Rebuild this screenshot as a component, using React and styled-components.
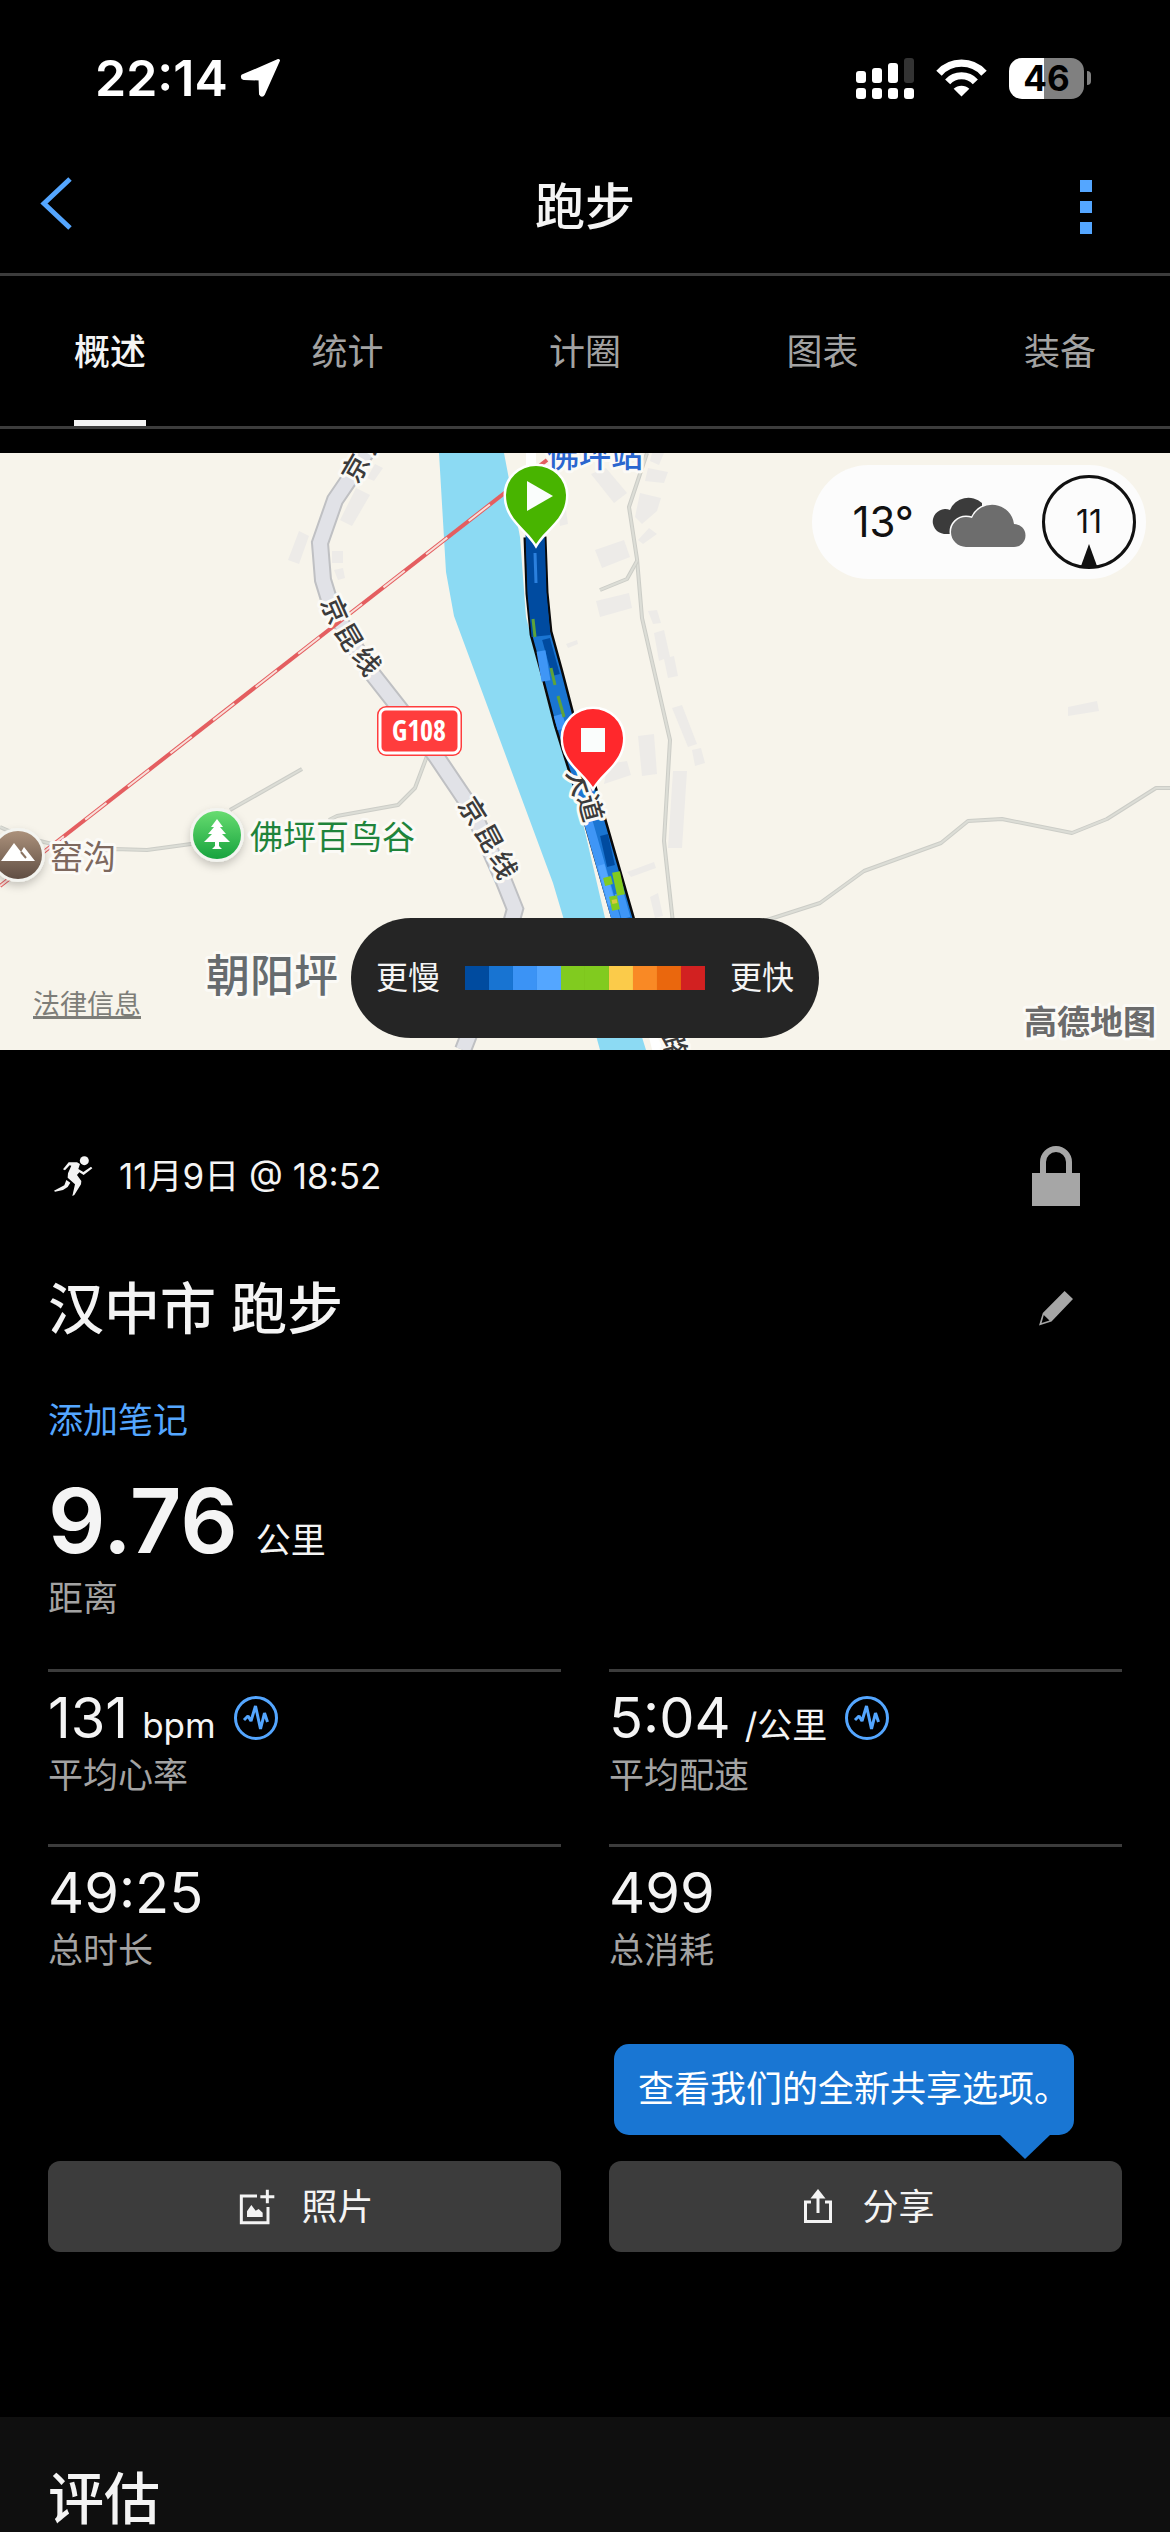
import React, { useState } from 'react';
import styled, { createGlobalStyle, css } from 'styled-components';

const colors = {
  text: '#f4f4f4',
  muted: '#a3a3a3',
  line: '#3c3c3c',
  blue: '#54a6ff',
  tip: '#1976d3',
}

const GlobalStyle = createGlobalStyle`
  * {
    box-sizing: border-box;
  }
  body {
    margin: 0;
    background-color: #000;
    color: ${colors.text};
    font-family: Inter, "Noto Sans CJK SC", sans-serif;
  }
  button {
    font-family: inherit;
  }
`
const sharedBtnCss = css`
  margin: 0;
  padding: 0;
  border: none;
  outline: none;
  background: transparent;
  cursor: pointer;
`
const Page = styled.div`
  min-height: 100vh;
  display: flex;
  flex-direction: column;
`

/* Status bar */
const StatusBar = styled.div`
  height: 120px;
  padding: 36px 79px 0 95px;
  display: flex;
  align-items: center;
  justify-content: space-between;
`
const StatusGroup = styled.div`
  display: flex;
  align-items: center;
  gap: ${props => props.$gap};
`
const Clock = styled.span`
  font-size: 50px;
  line-height: 60px;
  font-weight: 600;
  color: #fff;
`
const BatteryWrapper = styled.div`
  display: flex;
  align-items: center;
  gap: 3px;
`
const BatteryLevel = styled.div`
  width: 75px;
  height: 41px;
  border-radius: 13px;
  text-align: center;
  font-size: 35px;
  line-height: 41px;
  font-weight: 700;
  color: #000;
  background: linear-gradient(to right, #fff 47%, #808080 47%);
`
const BatteryNub = styled.div`
  width: 4px;
  height: 14px;
  border-radius: 0 4px 4px 0;
  background-color: #808080;
`

/* Header and tabs */
const Header = styled.header`
  height: 156px;
  padding: 21px 40px 0 40px;
  display: grid;
  grid-template-columns: 1fr auto 1fr;
  align-items: center;
  border-bottom: 3px solid ${colors.line};
`
const HeaderTitle = styled.h1`
  margin: 0;
  font-size: 50px;
  line-height: 60px;
  font-weight: 500;
`
const HeaderButton = styled.button`
  ${sharedBtnCss}
  display: flex;
  justify-self: ${props => props.$side};
`
const MenuButton = styled(HeaderButton)`
  padding: 0 38px;
`
const Tabs = styled.nav`
  height: 153px;
  padding: 0 74px;
  display: flex;
  justify-content: space-between;
  border-bottom: 3px solid ${colors.line};
`
const Tab = styled.button`
  ${sharedBtnCss}
  border-top: 8px solid transparent;
  border-bottom: 6px solid ${props => props.$active ? colors.text : 'transparent'};
  font-size: 36px;
  line-height: 48px;
  font-weight: ${props => props.$active ? 500 : 400};
  color: ${props => props.$active ? colors.text : colors.muted};
`

/* Map */
const MapWrapper = styled.section`
  position: relative;
  height: 597px;
  margin-top: 24px;
  overflow: hidden;
  background-color: #f7f4eb;
`
const MapCanvas = styled.svg`
  display: block;
  width: 100%;
  height: 100%;
`
const WeatherPill = styled.div`
  position: absolute;
  top: 12px;
  right: 24px;
  height: 114px;
  padding: 0 10px 0 40px;
  display: flex;
  align-items: center;
  border-radius: 57px;
  background-color: #fcfcfc;
  color: #111;
`
const Temperature = styled.span`
  margin-right: 18px;
  font-size: 42px;
  line-height: 48px;
`
const Wind = styled.div`
  position: relative;
  width: 94px;
  height: 94px;
  margin-left: 16px;
  display: flex;
  align-items: center;
  justify-content: center;
  border: 3px solid #111;
  border-radius: 50%;
  font-size: 32px;
  line-height: 36px;
  svg {
    position: absolute;
    bottom: 0;
  }
`
const PaceLegend = styled.div`
  position: absolute;
  left: 50%;
  bottom: 12px;
  height: 120px;
  padding: 0 25px;
  display: flex;
  align-items: center;
  gap: 25px;
  border-radius: 60px;
  background-color: #252525;
  font-size: 32px;
  line-height: 36px;
  white-space: nowrap;
  transform: translateX(-50%);
`
const PaceScale = styled.div`
  display: flex;
`
const PaceStep = styled.span`
  width: 24px;
  height: 24px;
  background-color: ${props => props.$color};
`
const LegalLink = styled.a`
  position: absolute;
  left: 33px;
  bottom: 27px;
  font-size: 27px;
  line-height: 36px;
  color: #7d7d78;
  text-decoration: underline;
  text-decoration-thickness: 3px;
`

/* Activity details */
const Details = styled.main`
  padding: 96px 48px 165px 48px;
`
const MetaRow = styled.div`
  height: ${props => props.$height};
  margin-top: ${props => props.$top};
  padding-right: 42px;
  display: flex;
  align-items: center;
  justify-content: space-between;
`
const DateInfo = styled.div`
  padding-left: 6px;
  display: flex;
  align-items: center;
  gap: 26px;
  font-size: 35px;
  line-height: 48px;
`
const IconButton = styled.button`
  ${sharedBtnCss}
  width: 48px;
  display: flex;
  justify-content: center;
`
const ActivityName = styled.h2`
  margin: 0;
  font-size: 56px;
  line-height: 72px;
  font-weight: 500;
`
const NoteButton = styled.button`
  ${sharedBtnCss}
  display: block;
  margin-top: 51px;
  font-size: 35px;
  line-height: 48px;
  color: ${colors.blue};
`
const Distance = styled.div`
  margin-top: 29px;
  display: flex;
  align-items: baseline;
  gap: 18px;
  font-size: 90px;
  line-height: 96px;
  font-weight: 600;
`
const Unit = styled.span`
  font-size: 35px;
  line-height: 36px;
  font-weight: 400;
`
const Label = styled.div`
  margin-top: ${props => props.$top};
  font-size: 35px;
  line-height: 48px;
  color: ${colors.muted};
`
const StatGrid = styled.div`
  margin-top: 47px;
  display: grid;
  grid-template-columns: 1fr 1fr;
  column-gap: 48px;
`
const StatCell = styled.div`
  height: 175px;
  padding-top: 14px;
  border-top: 3px solid ${colors.line};
`
const StatValue = styled.div`
  display: flex;
  align-items: center;
  gap: 18px;
  font-size: 56px;
  line-height: 64px;
`
const StatNumber = styled.span`
  display: flex;
  align-items: baseline;
  gap: 14px;
`
const Actions = styled.div`
  margin-top: 142px;
  display: grid;
  grid-template-columns: 1fr 1fr;
  column-gap: 48px;
`
const ActionWrapper = styled.div`
  position: relative;
`
const ActionButton = styled.button`
  ${sharedBtnCss}
  width: 100%;
  height: 91px;
  padding-left: 4px;
  display: flex;
  align-items: center;
  justify-content: center;
  gap: 26px;
  border-radius: 12px;
  background-color: ${colors.line};
  color: ${colors.text};
  font-size: 36px;
  line-height: 48px;
`
const Tooltip = styled.div`
  position: absolute;
  right: 48px;
  bottom: 117px;
  height: 91px;
  padding: 0 4px 0 24px;
  border-radius: 15px;
  background-color: ${colors.tip};
  color: #fff;
  font-size: 36px;
  line-height: 91px;
  white-space: nowrap;
  &::after {
    content: '';
    position: absolute;
    top: 100%;
    right: 24px;
    border: 25px solid transparent;
    border-top: 24px solid ${colors.tip};
    border-bottom: none;
  }
`
const Rating = styled.section`
  flex-grow: 1;
  padding: 52px 48px 0 48px;
  background-color: #0f0f0f;
  h2 {
    margin: 0;
    font-size: 56px;
    line-height: 60px;
    font-weight: 500;
  }
`

/* Icons */
const LocationIcon = () => (
  <svg width="42" height="40" viewBox="0 0 42 40" fill="#fff" stroke="#fff" strokeWidth="3" strokeLinejoin="round">
    <path d="M38.500 2.500 2.500 18 Q2 20 4 20.500 L20 21 20.500 36 Q22 38.500 23.500 36 Z" />
  </svg>
)

const SignalIcon = () => (
  <svg width="58" height="41" viewBox="0 0 58 41" fill="#fff">
    <rect x="0" y="13" width="10" height="12" rx="3" />
    <rect x="16" y="10" width="10" height="15" rx="3" />
    <rect x="32" y="5" width="10" height="20" rx="3" />
    <rect x="48" y="0" width="10" height="25" rx="3" fill="#333" />
    {[0, 16, 32, 48].map(x => <rect key={x} x={x} y="30" width="10" height="11" rx="3" />)}
  </svg>
)

const WifiIcon = () => (
  <svg width="51" height="38" viewBox="288 56 153 113" fill="none" stroke="#fff">
    <path d="M297 98 A91 91 0 0 1 432 98" strokeWidth="22" />
    <path d="M323 124 A57 57 0 0 1 406 124" strokeWidth="21" />
    <path d="M341 145 A34 34 0 0 1 388 145 L364.500 168 Z" fill="#fff" stroke="none" />
  </svg>
)

const BackIcon = () => (
  <svg width="33" height="62" viewBox="0 0 33 62" fill="none" stroke={colors.blue} strokeWidth="5">
    <path d="M30 3 4 27.500 30 52" />
  </svg>
)

const MenuIcon = () => (
  <svg width="12" height="54" viewBox="0 0 12 54" fill={colors.blue}>
    {[0, 21, 42].map(y => <rect key={y} y={y} width="12" height="12" />)}
  </svg>
)

const CloudsIcon = () => (
  <svg width="94" height="51" viewBox="0 0 94 51">
    <path d="M12 37 a12.500 12.500 0 1 1 6-24 A20 20 0 0 1 50 6 L50 37 Z" fill="#3b3b3b" />
    <path
      d="M34 50 a15 15 0 0 1 0-30 q3 0 6 1 A22 22 0 0 1 82 27 a11.500 11.500 0 0 1 0 23 Z"
      fill="#6d6d6d" stroke="#fcfcfc" strokeWidth="3" paintOrder="stroke"
    />
  </svg>
)

const RunnerIcon = () => (
  <svg width="39" height="42" viewBox="71 75 117 126" fill={colors.text}>
    <circle cx="162" cy="92" r="13.500" />
    <path d="M98 118 115 97 140 97 149 102 144 117 159 126 182 110 186 115 160 135 147 127 140 135 153 153 152 163 132 195 126 198 134 163 112 143 113 130 123 107 118 106 104 121Z" />
    <path d="M71 182 102 166 108 150 120 158 112 171 98 180 74 185Z" />
  </svg>
)

const LockIcon = () => (
  <svg width="48" height="60" viewBox="0 0 48 60">
    <rect y="27" width="48" height="33" fill="#a6a6a6" />
    <path d="M11 28V16a13 13 0 0 1 26 0V28" fill="none" stroke="#a6a6a6" strokeWidth="6" />
  </svg>
)

const PencilIcon = () => (
  <svg width="34" height="36" viewBox="0 0 34 36" fill="#a6a6a6" fillRule="evenodd">
    <path d="M25.600 0 34 8 12.500 30.400 0 34.500 3.800 22Z M2.600 32 4.800 24 10.500 29.500Z" />
  </svg>
)

const PulseIcon = () => (
  <svg width="44" height="44" viewBox="-22 -22 44 44" fill="none" stroke={colors.blue} strokeWidth="3">
    <circle r="20.500" />
    <path d="M-12 2-8-2-5 3-0.500-12 4.500 11 8.500-5 11.500 4" strokeLinejoin="bevel" />
  </svg>
)

const PhotoIcon = () => (
  <svg width="36" height="36" viewBox="60 81 108 108" fill="none" stroke={colors.text} strokeWidth="9">
    <path d="M114 102H67V182H147V135" />
    <path d="M145 83V124M124 104H166" />
    <path d="M84 165V148L97 129 110 146 119 141 131 152V165Z" fill={colors.text} stroke="none" />
  </svg>
)

const ShareIcon = () => (
  <svg width="36" height="36" viewBox="0 0 36 36" fill="none" stroke={colors.text} strokeWidth="3">
    <path d="M11 13H5.500V32.500H30.500V13H25" />
    <path d="M18 4V24" />
    <path d="M10.500 9.500 18 0 25.500 9.500Z" fill={colors.text} stroke="none" />
  </svg>
)

/* Map data, in map units */
const buildings = [
  '595,97 624,87 630,104 602,115', '591,21 606,15 627,40 614,50', '652,0 664,0 659,12 650,8',
  '648,15 668,19 664,30 645,28', '640,40 661,45 657,58 642,71 635,64', '649,75 657,81 643,91 638,87',
  '596,148 629,140 632,155 600,164', '648,158 657,157 661,170 653,171',
  '654,180 664,177 670,204 674,203 678,223 668,225 664,206 659,208',
  '672,255 682,252 697,291 688,294', '692,297 701,295 705,310 695,313',
  '638,283 654,281 657,321 642,323', '673,318 687,318 682,395 668,395',
  '608,311 627,308 631,322 604,331', '627,419 654,409 656,415 631,424',
  '650,444 658,440 663,463 655,465', '1068,254 1097,248 1099,258 1068,263',
  '356,35 370,42 352,73 340,67', '375,11 383,15 374,28 367,25', '299,78 309,83 299,111 288,107',
  '332,98 343,98 343,110 332,110', '334,117 343,115 345,125 338,127',
  '566,191 577,187 578,191 568,195', '558,52 565,50 568,71 560,73',
]

const lanes = [
  '647,0 640,21 629,54 637,106 642,165 670,287 664,388 673,470',
  '637,108 627,126 600,137',
  '740,477 767,467 820,450 864,418 941,390 968,368 1002,366 1072,380 1107,366 1156,335 1170,335',
  '427,303 415,335 398,352 337,363 329,367',
  '302,316 230,357',
  '0,374 20,383 80,398 115,396 147,397 191,391',
]

const highway = '372,-10 350,25 335,47 320,90 323,127 331,153 367,214 400,256 436,303 471,355 503,426 515,456 507,485 463,597'

/* each character follows the direction of its road */
const roadNames = [
  { char: '京', x: 355, y: 15, angle: -60 },
  { char: '昆', x: 371, y: -12, angle: -58 },
  { char: '京', x: 335, y: 157, angle: 66 },
  { char: '昆', x: 349, y: 184, angle: 60 },
  { char: '线', x: 367, y: 208, angle: 54 },
  { char: '京', x: 473, y: 358, angle: 58 },
  { char: '昆', x: 489, y: 385, angle: 62 },
  { char: '线', x: 504, y: 412, angle: 66 },
  { char: '大', x: 580, y: 329, angle: 72 },
  { char: '道', x: 591, y: 355, angle: 75 },
  { char: '路', x: 675, y: 593, angle: 75 },
]

const RoadName = styled.text`
  font-size: 27px;
  font-weight: 500;
  fill: #3b3b3b;
  stroke: #fbfaf6;
  stroke-width: 6px;
  stroke-linejoin: round;
  paint-order: stroke;
  text-anchor: middle;
`
const PlaceName = styled.text`
  font-size: ${props => props.$size};
  font-weight: ${props => props.$weight || 400};
  fill: ${props => props.$color};
  stroke: #fbfaf6;
  stroke-width: 6px;
  stroke-linejoin: round;
  paint-order: stroke;
`
const ShieldText = styled.text`
  font-family: "Liberation Sans Narrow", "Open Sans Condensed", Roboto, sans-serif;
  font-size: 28px;
  font-weight: 700;
  fill: #fff;
  text-anchor: middle;
`

const Pin = ({ x, y, color, children }) => (
  <g transform={`translate(${x} ${y})`}>
    <path
      d="M0 49 C-10 33-30 24-30 0 A30 29 0 0 1 30 0 C30 24 10 33 0 49Z"
      fill={color} stroke="#fff" strokeWidth="5" paintOrder="stroke"
    />
    {children}
  </g>
)

const RouteMap = () => (
  <MapCanvas viewBox="0 0 1170 597" preserveAspectRatio="xMidYMid slice">
    <defs>
      <linearGradient id="park" x2="0" y2="1">
        <stop offset="0" stopColor="#67dc70" />
        <stop offset="1" stopColor="#17a33e" />
      </linearGradient>
      <linearGradient id="hill" x2="0" y2="1">
        <stop offset="0" stopColor="#ab917b" />
        <stop offset="1" stopColor="#604e43" />
      </linearGradient>
      <filter id="shade" x="-50%" y="-50%" width="200%" height="200%">
        <feDropShadow dx="0" dy="4" stdDeviation="4" floodOpacity="0.2" />
      </filter>
    </defs>
    <rect width="1170" height="597" fill="#f7f4eb" />

    {buildings.map(points => <polygon key={points} points={points} fill="#edebe8" />)}
    {lanes.map(points => (
      <g key={points} fill="none" strokeLinejoin="round">
        <polyline points={points} stroke="#cccdc7" strokeWidth="4" />
        <polyline points={points} stroke="#dcddd6" strokeWidth="2" />
      </g>
    ))}

    <polygon
      points="439,0 446,119 454,163 553,430 564,467 600,597 646,597 605,465 583,370 543,232 532,187 526,164 520,84 504,0"
      fill="#8cdaf3"
    />
    <polyline points={highway} fill="none" stroke="#bfc0c3" strokeWidth="18" />
    <polyline points={highway} fill="none" stroke="#e1e2e7" strokeWidth="14" />

    {/* railway */}
    <path d="M0 433 547 7" stroke="#e45e60" strokeWidth="4" />
    <path d="M0 433 547 7" stroke="#f8dfd9" strokeWidth="2" strokeDasharray="27 27" />

    {/* recorded track */}
    <path d="M531 0V50M652 575 658 600" stroke="#fff" strokeWidth="10" />
    <polyline points="535,84 537,140 541,180 552,220 565,270 591,354 623,465 650,560" fill="none" stroke="#0a0a0a" strokeWidth="23" />
    <polyline points="535,84 537,140 541,180 552,220 565,270 591,354 623,465 650,560" fill="none" stroke="#1a75d2" strokeWidth="18" />
    <path d="M535 80 537 140 541 183" fill="none" stroke="#004ba0" strokeWidth="19" />
    <path d="M546 186 556 222" stroke="#004ba0" strokeWidth="8" />
    <path d="M541 198 546 228M558 262 562 276M588 368 616 466M619 440 626 465" stroke="#3f96f6" strokeWidth="9" />
    <path d="M601 412 612 452" stroke="#54a6ff" strokeWidth="7" />
    <path d="M604 382 611 413" stroke="#004ba0" strokeWidth="8" />
    <path d="M535 100 536 130" stroke="#2b80dd" strokeWidth="3" />
    <path d="M533 166 535 184M551 215 555 232M558 243 564 264" stroke="#5ea33a" strokeWidth="3" />
    <path d="M616 419 621 442M607 424 609 432M613 443 616 457" stroke="#81cb1f" strokeWidth="8" />
    <path d="M612 449 617 448" stroke="#d8c93e" strokeWidth="4" />

    {roadNames.map(name => (
      <RoadName
        key={`${name.char}${name.x}`}
        transform={`translate(${name.x} ${name.y}) rotate(${name.angle})`}
        y="10"
      >
        {name.char}
      </RoadName>
    ))}

    <rect x="377" y="253" width="85" height="50" rx="9" fill="#ff3d3d" />
    <rect x="380" y="256" width="79" height="44" rx="6" fill="#ff3d3d" stroke="#fff" strokeWidth="3" />
    <ShieldText x="419" y="288">G108</ShieldText>

    <PlaceName x="547" y="14" $size="32px" $weight={500} $color="#2a66cf">佛坪站</PlaceName>

    <g transform="translate(217 382)">
      <circle r="27" fill="#f3f4f0" filter="url(#shade)" />
      <circle r="24" fill="url(#park)" />
      <path d="M0-16 6-8H3L9-1H5L13 7H2V11L5 14H-5L-2 11V7H-13L-5-1H-9L-3-8H-6Z" fill="#fff" />
    </g>
    <PlaceName x="250" y="396" $size="33px" $color="#1f843b">佛坪百鸟谷</PlaceName>

    <g transform="translate(18 402)">
      <circle r="27" fill="#f3f4f0" filter="url(#shade)" />
      <circle r="24" fill="url(#hill)" />
      <path d="M-17 6-4-12 3-3 6-8 17 6Z" fill="#fff" />
      <path d="M3-3 8 3" stroke="#8a7361" strokeWidth="2" />
    </g>
    <PlaceName x="50" y="416" $size="33px" $color="#7d685e">窑沟</PlaceName>
    <PlaceName x="206" y="539" $size="44px" $weight={500} $color="#666b6e">朝阳坪</PlaceName>
    <PlaceName x="1024" y="581" $size="33px" $weight={700} $color="#6b6b6b">高德地图</PlaceName>

    <Pin x={536} y={42} color="#48b400">
      <path d="M-9-14V16L17 1Z" fill="#fafdfc" />
    </Pin>
    <Pin x={593} y={285} color="#ff282c">
      <rect x="-12" y="-10" width="24" height="24" fill="#fafdfc" />
    </Pin>
  </MapCanvas>
)

const paceColors = [
  '#004b9f', '#1874d2', '#3b93f5', '#54a6ff', '#81cb1f',
  '#81cb1f', '#fbcb4a', '#f98925', '#ea670d', '#d22121',
]

const tabNames = ['概述', '统计', '计圈', '图表', '装备']

const stats = [
  { value: '131', unit: 'bpm', label: '平均心率', chart: true },
  { value: '5:04', unit: '/公里', label: '平均配速', chart: true },
  { value: '49:25', label: '总时长' },
  { value: '499', label: '总消耗' },
]

export default function App() {
  const [activeTab, setActiveTab] = useState(tabNames[0]);

  return (
    <Page>
      <GlobalStyle />
      <StatusBar>
        <StatusGroup $gap="12px">
          <Clock>22:14</Clock>
          <LocationIcon />
        </StatusGroup>
        <StatusGroup $gap="22px">
          <SignalIcon />
          <WifiIcon />
          <BatteryWrapper>
            <BatteryLevel>46</BatteryLevel>
            <BatteryNub />
          </BatteryWrapper>
        </StatusGroup>
      </StatusBar>

      <Header>
        <HeaderButton $side="start" aria-label="返回"><BackIcon /></HeaderButton>
        <HeaderTitle>跑步</HeaderTitle>
        <MenuButton $side="end" aria-label="更多"><MenuIcon /></MenuButton>
      </Header>

      <Tabs>
        {tabNames.map(name => (
          <Tab key={name} $active={name === activeTab} onClick={() => setActiveTab(name)}>
            {name}
          </Tab>
        ))}
      </Tabs>

      <MapWrapper>
        <RouteMap />
        <WeatherPill>
          <Temperature>13°</Temperature>
          <CloudsIcon />
          <Wind>
            11
            <svg width="16" height="22" viewBox="0 0 16 22" fill="#111">
              <path d="M8 0 16 22H0Z" />
            </svg>
          </Wind>
        </WeatherPill>
        <PaceLegend>
          <span>更慢</span>
          <PaceScale>
            {paceColors.map((color, i) => <PaceStep key={i} $color={color} />)}
          </PaceScale>
          <span>更快</span>
        </PaceLegend>
        <LegalLink href="#legal">法律信息</LegalLink>
      </MapWrapper>

      <Details>
        <MetaRow $height="60px">
          <DateInfo>
            <RunnerIcon />
            <span>11月9日 @ 18:52</span>
          </DateInfo>
          <IconButton aria-label="隐私"><LockIcon /></IconButton>
        </MetaRow>
        <MetaRow $height="72px" $top="67px">
          <ActivityName>汉中市 跑步</ActivityName>
          <IconButton aria-label="编辑"><PencilIcon /></IconButton>
        </MetaRow>
        <NoteButton>添加笔记</NoteButton>

        <Distance>
          9.76
          <Unit>公里</Unit>
        </Distance>
        <Label $top="5px">距离</Label>

        <StatGrid>
          {stats.map(stat => (
            <StatCell key={stat.label}>
              <StatValue>
                <StatNumber>
                  {stat.value}
                  {stat.unit && <Unit>{stat.unit}</Unit>}
                </StatNumber>
                {stat.chart && <PulseIcon />}
              </StatValue>
              <Label $top="1px">{stat.label}</Label>
            </StatCell>
          ))}
        </StatGrid>

        <Actions>
          <ActionButton><PhotoIcon />照片</ActionButton>
          <ActionWrapper>
            <Tooltip>查看我们的全新共享选项。</Tooltip>
            <ActionButton><ShareIcon />分享</ActionButton>
          </ActionWrapper>
        </Actions>
      </Details>

      <Rating>
        <h2>评估</h2>
      </Rating>
    </Page>
  )
}
